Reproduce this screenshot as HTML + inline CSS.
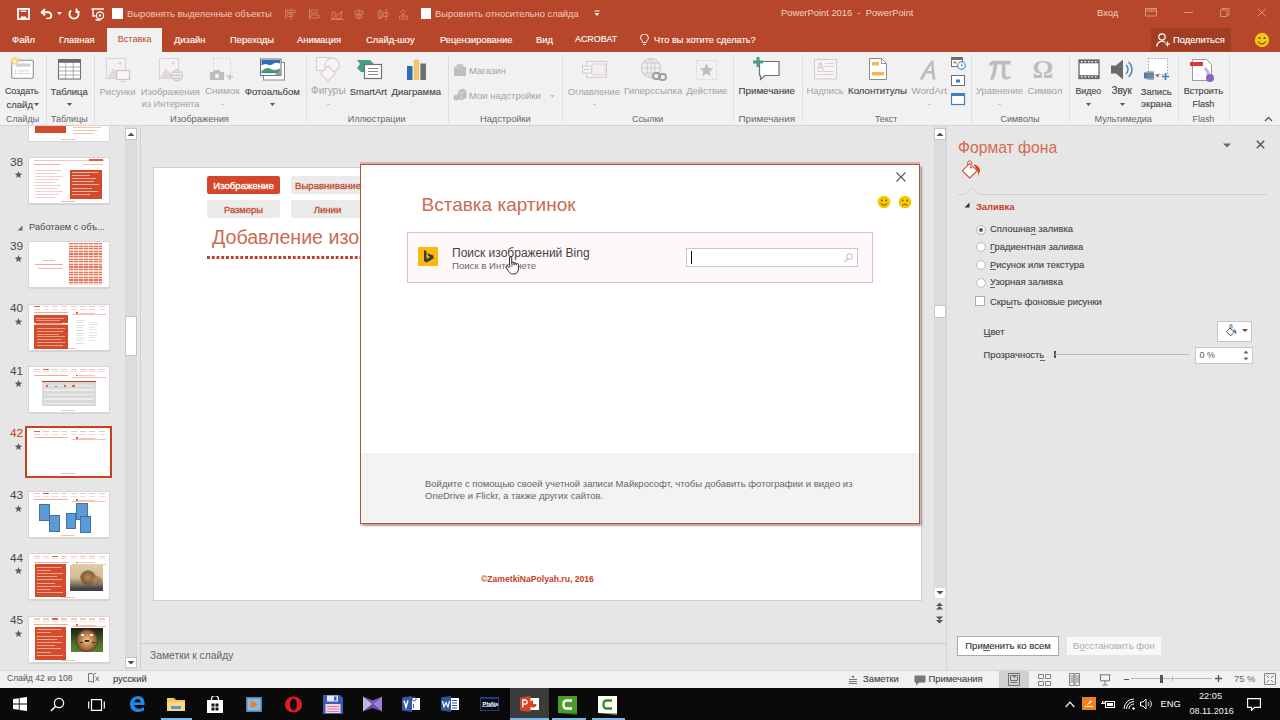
<!DOCTYPE html>
<html><head><meta charset="utf-8">
<style>
*{margin:0;padding:0;box-sizing:border-box}
html,body{width:1280px;height:720px;overflow:hidden;background:#E6E6E6;font-family:"Liberation Sans",sans-serif}
.a{position:absolute}
.t{position:absolute;white-space:nowrap;line-height:1}
.k{-webkit-text-stroke:0.12px currentColor}
#title{left:0;top:0;width:1280px;height:28px;background:#B7472A}
#tabs{left:0;top:28px;width:1280px;height:24px;background:#B7472A}
#ribbon{left:0;top:52px;width:1280px;height:74px;background:#F1F1F1;border-bottom:1px solid #D4D4D4}
#status{left:0;top:670px;width:1280px;height:18px;background:#F1F1F1;border-top:1px solid #D6D6D6}
#taskbar{left:0;top:688px;width:1280px;height:32px;background:#0A0A0A}
</style></head><body>
<!-- TITLE BAR -->
<div id="title" class="a">
 <svg class="a" style="left:17px;top:7.5px" width="13" height="12" viewBox="0 0 13 12"><path d="M1 0.9h11v10.2h-11z" fill="none" stroke="#fff" stroke-width="1.8"/><path d="M3.5 3.2h6" stroke="#fff" stroke-width="1.3"/><path d="M3.8 8.5h5.4v2.6h-5.4z" fill="#fff"/></svg>
 <svg class="a" style="left:40px;top:8px" width="13" height="11" viewBox="0 0 13 11"><path d="M1.8 4.2h6.2a3.3 3.3 0 0 1 0 6.6h-2 M5 1L1.6 4.2 5 7.4" fill="none" stroke="#fff" stroke-width="1.9"/></svg>
 <svg class="a" style="left:56.5px;top:12px" width="6" height="4"><path d="M0 0h5l-2.5 3z" fill="#fff"/></svg>
 <svg class="a" style="left:68px;top:7.5px" width="12" height="12" viewBox="0 0 12 12"><path d="M3.2 2.4A4.6 4.6 0 1 0 8.8 2.4 M8.5 0.5v3.5h3" fill="none" stroke="#fff" stroke-width="1.8"/></svg>
 <svg class="a" style="left:91px;top:7.5px" width="14" height="13" viewBox="0 0 14 13"><path d="M0.5 1h12.5 M2 1v7h2.5 M4.5 12h5" fill="none" stroke="#fff" stroke-width="1.4"/><circle cx="9" cy="7.5" r="3.6" fill="none" stroke="#fff" stroke-width="1.3"/><path d="M8 5.8v3.4l2.5-1.7z" fill="#fff"/></svg>
 <div class="a" style="left:112px;top:8px;width:11px;height:11px;background:#fff"></div>
 <div class="t" style="left:127px;top:9.4px;font-size:9.4px;color:#F2C9BD">Выровнять выделенные объекты</div>
 <svg class="a" style="left:283px;top:8px;opacity:.32" width="130" height="13" viewBox="0 0 130 13" fill="none" stroke="#fff" stroke-width="0.9">
   <path d="M2.5 1v10 M4 2h8v2.5h-8z M4 6h6v2.5h-6z M8 1v11"/>
   <path d="M26.5 1v11 M28 2h6v3h-6z M28 7h8v3h-8z"/>
   <path d="M48 11.5h13 M49 4h3v6.5h-3z M54 6h4v4.5h-4z M58.5 3v3 M57 4.5h3"/>
   <path d="M76 1v11 M72 3h8v3h-8z M73 7h6v3h-6z"/>
   <path d="M95 3h4v7h-4z M100 4.5h5v4h-5z M97 1.5v10 M103 1v11"/>
   <path d="M120 2a2 2 0 1 0 0.1 0 M116.5 8h8v3h-8z M120 6v5"/>
  </svg>
 <div class="a" style="left:421px;top:8px;width:10px;height:11px;background:#fff"></div>
 <div class="t" style="left:435px;top:9.4px;font-size:9.4px;color:#F2C9BD">Выровнять относительно слайда</div>
 <svg class="a" style="left:594px;top:10px" width="6" height="7"><path d="M0.5 1h5" stroke="#fff" stroke-width="1"/><path d="M0.5 3h5l-2.5 3z" fill="#fff"/></svg>
 <div class="t" style="left:781px;top:9px;font-size:9.35px;color:#F5D3C6">PowerPoint 2016&nbsp; -&nbsp; PowerPoint</div>
 <div class="t" style="left:1097px;top:8.2px;font-size:9.4px;color:#F5D3C6">Вход</div>
 <svg class="a" style="left:1145px;top:8px" width="12" height="9"><path d="M0.5 0.5h11v7.5h-11z" fill="none" stroke="#DC9482" stroke-width="1"/><path d="M1 1h10v3h-10z" fill="#C96A55"/><path d="M4.5 4l1.5-1.5 1.5 1.5" fill="none" stroke="#DC9482" stroke-width="0.8"/></svg>
 <div class="a" style="left:1184px;top:12px;width:8.5px;height:1px;background:#DC9482"></div>
 <svg class="a" style="left:1220px;top:8px" width="10" height="9"><path d="M0.5 2h6.5v6.5h-6.5z M2 2v-1.5h7v6.5h-2" fill="none" stroke="#DC9482" stroke-width="0.9"/></svg>
 <svg class="a" style="left:1257px;top:8px" width="10" height="9"><path d="M0.5 0.5l8.5 8 M9 0.5l-8.5 8" stroke="#DC9482" stroke-width="1"/></svg>
</div>
<!-- TABS -->
<div id="tabs" class="a">
 <div class="a" style="left:107px;top:0;width:55px;height:24px;background:#F1F1F1"></div>
 <div class="t k" style="left:12px;top:7px;font-size:9.4px;color:#fff">Файл</div>
 <div class="t k" style="left:59px;top:7px;font-size:9.4px;color:#fff">Главная</div>
 <div class="t" style="left:117.8px;top:7px;font-size:9.05px;color:#B7472A">Вставка</div>
 <div class="t k" style="left:174px;top:7px;font-size:9.4px;color:#fff">Дизайн</div>
 <div class="t k" style="left:230px;top:7px;font-size:9.4px;color:#fff">Переходы</div>
 <div class="t k" style="left:297px;top:7px;font-size:9.4px;color:#fff">Анимация</div>
 <div class="t k" style="left:366px;top:7px;font-size:9.4px;color:#fff">Слайд-шоу</div>
 <div class="t k" style="left:440px;top:7px;font-size:9.4px;color:#fff">Рецензирование</div>
 <div class="t k" style="left:536px;top:7px;font-size:9.4px;color:#fff">Вид</div>
 <div class="t k" style="left:575px;top:7px;font-size:8.9px;color:#fff">ACROBAT</div>
 <svg class="a" style="left:640px;top:6px" width="9" height="12" viewBox="0 0 9 12"><path d="M2.8 8.5c0-1.8-2.2-2.5-2.2-4.6a3.9 3.9 0 0 1 7.8 0c0 2.1-2.2 2.8-2.2 4.6z M3 10.5h3" fill="none" stroke="#fff" stroke-width="1"/></svg>
 <div class="t k" style="left:654px;top:7.6px;font-size:9.2px;color:#fff">Что вы хотите сделать?</div>
 <div class="a" style="left:1151px;top:0;width:80px;height:23px;background:#A13D23"></div>
 <svg class="a" style="left:1156px;top:5px" width="15" height="14" viewBox="0 0 15 14"><circle cx="6" cy="4" r="3.2" fill="none" stroke="#fff" stroke-width="1.2"/><path d="M0.8 13.5a5.2 5.2 0 0 1 8.5-4 M9 11h5 M11.5 8.5v5" fill="none" stroke="#fff" stroke-width="1.2"/></svg>
 <div class="t k" style="left:1173px;top:7px;font-size:9.4px;color:#fff">Поделиться</div>
 <svg class="a" style="left:1254px;top:4px" width="16" height="16" viewBox="0 0 16 16"><circle cx="8" cy="8" r="7.2" fill="#F5C518"/><circle cx="5.5" cy="6" r="1" fill="#5a4000"/><circle cx="10.5" cy="6" r="1" fill="#5a4000"/><path d="M4.2 9.3a4 4 0 0 0 7.6 0" fill="none" stroke="#5a4000" stroke-width="1"/></svg>
</div>
<!-- RIBBON -->
<div id="ribbon" class="a"></div>
<div class="a" style="left:45.5px;top:55px;width:1px;height:68px;background:#DFDFDF"></div>
<div class="a" style="left:94px;top:55px;width:1px;height:68px;background:#DFDFDF"></div>
<div class="a" style="left:306px;top:55px;width:1px;height:68px;background:#DFDFDF"></div>
<div class="a" style="left:448px;top:55px;width:1px;height:68px;background:#DFDFDF"></div>
<div class="a" style="left:562px;top:55px;width:1px;height:68px;background:#DFDFDF"></div>
<div class="a" style="left:733px;top:55px;width:1px;height:68px;background:#DFDFDF"></div>
<div class="a" style="left:801.5px;top:55px;width:1px;height:68px;background:#DFDFDF"></div>
<div class="a" style="left:971px;top:55px;width:1px;height:68px;background:#DFDFDF"></div>
<div class="a" style="left:1068.5px;top:55px;width:1px;height:68px;background:#DFDFDF"></div>
<div class="a" style="left:1177.5px;top:55px;width:1px;height:68px;background:#DFDFDF"></div>
<div class="a" style="left:1229px;top:55px;width:1px;height:68px;background:#DFDFDF"></div>
<svg class="a" style="left:9px;top:56px" width="26" height="24" viewBox="0 0 26 24"><rect x="2.7" y="4.3" width="21.6" height="18" rx="1.5" fill="#fff" stroke="#8f8f8f" stroke-width="1.1"/><rect x="7" y="7.5" width="14.5" height="3.2" fill="#d0d0d0"/><path d="M8.5 14.8h12.5 M8.5 17.5h12.5" stroke="#c4c4c4" stroke-width="0.7"/><path d="M6 14.8h1 M6 17.5h1" stroke="#E07050" stroke-width="0.8"/><circle cx="5.8" cy="5.2" r="3.6" fill="#F9E2A6" opacity="0.9"/><path d="M5.8 0.3v9.8 M0.9 5.2h9.8 M2.3 1.7l7 7 M9.3 1.7l-7 7" stroke="#F2CC6E" stroke-width="0.9"/><circle cx="5.8" cy="5.2" r="1.5" fill="#FFF8E0"/></svg>
<div class="t k" style="left:-15.0px;top:87.11px;width:73.5px;text-align:center;font-size:8.90px;color:#444;">Создать</div>
<div class="t k" style="left:6.5px;top:99.6px;font-size:9.5px;color:#444;">слайд</div>
<svg class="a" style="left:34.0px;top:103px" width="5" height="3"><path d="M0 0h5l-2.5 3z" fill="#555"/></svg>
<div class="t" style="left:-13.4px;top:114.91px;width:71.9px;text-align:center;font-size:8.90px;color:#666;">Слайды</div>
<svg class="a" style="left:57px;top:58px" width="25" height="22" viewBox="0 0 25 22"><rect x="1.5" y="1.5" width="22" height="19.5" fill="#fff" stroke="#707070" stroke-width="1.1"/><rect x="1.5" y="1.5" width="22" height="3.3" fill="#6a6a6a"/><path d="M8.7 5v16 M16.2 5v16 M1.5 9h22 M1.5 13h22 M1.5 17h22" stroke="#9a9a9a" stroke-width="0.8"/></svg>
<div class="t k" style="left:30.6px;top:86.61px;width:77.2px;text-align:center;font-size:9.49px;color:#444;">Таблица</div>
<svg class="a" style="left:67.0px;top:103px" width="5" height="3"><path d="M0 0h5l-2.5 3z" fill="#555"/></svg>
<div class="t" style="left:31.0px;top:114.81px;width:76.8px;text-align:center;font-size:9.01px;color:#666;">Таблицы</div>
<svg class="a" style="left:105px;top:57px" width="27" height="26" viewBox="0 0 27 26"><rect x="1.5" y="1.5" width="19" height="20" fill="#F6F1F4" stroke="#D8D3D6" stroke-width="1"/><circle cx="15" cy="6" r="1.6" fill="#DCD6DA"/><path d="M2 21l6-10 5 6 3-3v7z" fill="#DEDADC"/><rect x="11.5" y="13.5" width="13" height="9" fill="#F7F5F6" stroke="#C9C9C9" stroke-width="1.3"/><path d="M16 24.5h4" stroke="#c9c9c9" stroke-width="1"/></svg>
<div class="t" style="left:79.5px;top:86.57px;width:76.0px;text-align:center;font-size:9.54px;color:#A3A3A3;">Рисунки</div>
<svg class="a" style="left:158px;top:57px" width="27" height="26" viewBox="0 0 27 26"><rect x="1.5" y="1.5" width="19" height="20" fill="#F6F1F4" stroke="#D8D3D6" stroke-width="1"/><circle cx="15" cy="6" r="1.6" fill="#DCD6DA"/><path d="M2 21l6-10 5 6 3-3v7z" fill="#DEDADC"/><circle cx="19" cy="18.5" r="5.5" fill="#F4F2F3" stroke="#C9C9C9" stroke-width="1.1"/><path d="M13.5 18.5h11 M19 13v11 M15 15.5h8 M15 21.5h8" stroke="#C9C9C9" stroke-width="0.8" fill="none"/><ellipse cx="19" cy="18.5" rx="2.5" ry="5.5" fill="none" stroke="#c9c9c9" stroke-width="0.8"/></svg>
<div class="t" style="left:120.7px;top:86.65px;width:99.3px;text-align:center;font-size:9.44px;color:#A3A3A3;">Изображения</div>
<div class="t" style="left:121.5px;top:99.73px;width:98.0px;text-align:center;font-size:9.35px;color:#A3A3A3;">из Интернета</div>
<svg class="a" style="left:209px;top:57px" width="26" height="26" viewBox="0 0 26 26"><rect x="4.5" y="1.5" width="17" height="17" fill="#F6F1F4" stroke="#D4CDD2" stroke-width="0.9" stroke-dasharray="1.5 1.5"/><path d="M1 15h3l1.5-2h5l1.5 2h3v8h-14z" fill="#BDBDBD"/><circle cx="8" cy="19" r="2.2" fill="#F1F1F1"/><path d="M18 20h6 M21 17v6" stroke="#C4C4C4" stroke-width="1.3"/></svg>
<div class="t" style="left:185.0px;top:86.33px;width:74.5px;text-align:center;font-size:9.82px;color:#A3A3A3;">Снимок</div>
<div class="a" style="left:220.5px;top:104px;width:3px;height:1px;background:#c8c8c8"></div>
<svg class="a" style="left:259px;top:57px" width="27" height="26" viewBox="0 0 27 26"><rect x="4.5" y="5.5" width="21" height="17.5" fill="#fff" stroke="#8a8a8a" stroke-width="1"/><rect x="1.5" y="2" width="20.5" height="16.5" fill="#fff" stroke="#6C6C6C" stroke-width="1"/><rect x="2.5" y="3" width="18.5" height="5.5" fill="#2F6FB8"/><path d="M2.5 8.5q3-2.5 6-1 q4 1.5 6-1 q3-1.5 6.5 0v8h-18.5z" fill="#fff"/><path d="M2.5 14q5-4.5 9.5-2 q4.5 2 9-0.5v3.5h-18.5z" fill="#4E9A6A"/><path d="M2.5 15.5h18.5" stroke="#3C7FC0" stroke-width="1.3"/><path d="M15 18.5l7-6v6z" fill="#9a9a9a"/></svg>
<div class="t k" style="left:224.6px;top:86.52px;width:95.4px;text-align:center;font-size:9.59px;color:#444;">Фотоальбом</div>
<svg class="a" style="left:270.0px;top:103px" width="5" height="3"><path d="M0 0h5l-2.5 3z" fill="#555"/></svg>
<div class="t" style="left:150.0px;top:114.49px;width:99.0px;text-align:center;font-size:9.39px;color:#666;">Изображения</div>
<svg class="a" style="left:315px;top:56px" width="26" height="26" viewBox="0 0 26 26"><rect x="1.5" y="1.5" width="13" height="13" fill="#F7F3F6" stroke="#D4CDD2" stroke-width="1.1"/><circle cx="17" cy="9" r="7" fill="#F7F3F6" stroke="#D4CDD2" stroke-width="1.1"/><path d="M13 10l7.5 7.5-7.5 7.5-7.5-7.5z" fill="#F7F3F6" stroke="#D4CDD2" stroke-width="1.1"/></svg>
<div class="t" style="left:291.0px;top:86.18px;width:74.7px;text-align:center;font-size:10.00px;color:#A3A3A3;">Фигуры</div>
<div class="a" style="left:326.5px;top:104px;width:3px;height:1px;background:#c8c8c8"></div>
<svg class="a" style="left:356px;top:59px" width="27" height="21" viewBox="0 0 27 21"><path d="M1 1h13l4 4v8h-13l-4-4 3-4z" fill="#4A9D7E"/><rect x="8.5" y="5.5" width="17" height="14" fill="#fff" stroke="#707070" stroke-width="1.2"/><path d="M12 9.5h10 M12 12.5h10 M12 15.5h10" stroke="#8a8a8a" stroke-width="1"/></svg>
<div class="t k" style="left:329.8px;top:86.66px;width:77.2px;text-align:center;font-size:9.43px;color:#444;">SmartArt</div>
<svg class="a" style="left:405px;top:58px" width="23" height="23" viewBox="0 0 23 23"><rect x="2" y="8" width="5.5" height="14" fill="#2F6EB5"/><rect x="8.7" y="1.5" width="5.5" height="20.5" fill="#F2C46B"/><rect x="15.4" y="5.5" width="5.5" height="16.5" fill="#6D6D6D"/></svg>
<div class="t k" style="left:371.5px;top:86.58px;width:89.5px;text-align:center;font-size:9.52px;color:#444;">Диаграмма</div>
<div class="t" style="left:327.8px;top:114.78px;width:97.9px;text-align:center;font-size:9.05px;color:#666;">Иллюстрации</div>
<svg class="a" style="left:453px;top:63px" width="14" height="13" viewBox="0 0 14 13"><path d="M1 4h12v9h-12z" fill="#BDBDBD"/><path d="M2.5 4l2-3h5l2 3" fill="#C9C9C9"/><path d="M1 4l12 4" stroke="#d6d6d6" stroke-width="0.7"/></svg>
<div class="t" style="left:469px;top:66.1px;font-size:9.5px;color:#A3A3A3;">Магазин</div>
<svg class="a" style="left:453px;top:88px" width="14" height="13" viewBox="0 0 14 13"><circle cx="3.5" cy="9.5" r="3" fill="#BDBDBD"/><path d="M5 3l5-2.5 3.5 2v7l-5 3-3.5-2z" fill="#BDBDBD"/><path d="M8.5 5v7 M5 3l3.5 2 5-2.5" stroke="#e0e0e0" stroke-width="0.7" fill="none"/></svg>
<div class="t" style="left:469px;top:90.5px;font-size:9.5px;color:#A3A3A3;">Мои надстройки</div>
<svg class="a" style="left:549.5px;top:95px" width="5" height="3"><path d="M0 0h5l-2.5 3z" fill="#c4c4c4"/></svg>
<div class="t" style="left:460.0px;top:114.62px;width:90.7px;text-align:center;font-size:9.24px;color:#666;">Надстройки</div>
<svg class="a" style="left:581px;top:59px" width="27" height="20" viewBox="0 0 27 20"><rect x="5.5" y="2.5" width="20" height="16" fill="#F7F3F6" stroke="#D4CDD2" stroke-width="1.1"/><rect x="1.5" y="7" width="9" height="7" fill="#F7F3F6" stroke="#D4CDD2" stroke-width="1.1"/><rect x="11" y="5" width="13" height="11" fill="#F4EEF2" stroke="#DAD4D8" stroke-width="1"/><path d="M3 10.5h6" stroke="#D4CDD2" stroke-width="1"/></svg>
<div class="t" style="left:547.6px;top:86.69px;width:92.4px;text-align:center;font-size:9.40px;color:#A3A3A3;">Оглавление</div>
<div class="a" style="left:592.5px;top:104px;width:3px;height:1px;background:#c8c8c8"></div>
<svg class="a" style="left:640px;top:57px" width="27" height="25" viewBox="0 0 27 25"><circle cx="11" cy="11" r="9.5" fill="none" stroke="#CACACA" stroke-width="1.1"/><ellipse cx="11" cy="11" rx="4" ry="9.5" fill="none" stroke="#CACACA" stroke-width="1"/><path d="M1.5 11h19 M3 6h16 M3 16h16 M11 1.5v19" stroke="#CACACA" stroke-width="1" fill="none"/><rect x="13" y="16" width="7" height="6" rx="3" fill="#F1F1F1" stroke="#9E9E9E" stroke-width="2"/><rect x="19" y="17" width="7" height="6" rx="3" fill="none" stroke="#9E9E9E" stroke-width="2"/></svg>
<div class="t" style="left:604.0px;top:86.42px;width:98.4px;text-align:center;font-size:9.71px;color:#A3A3A3;">Гиперссылка</div>
<svg class="a" style="left:695px;top:59px" width="24" height="22" viewBox="0 0 24 22"><rect x="1.5" y="1.5" width="20" height="19" fill="none" stroke="#CFCFCF" stroke-width="0.9" stroke-dasharray="1.5 1.5"/><path d="M11.5 4.5l2 4.5 4.8 0.4-3.7 3.1 1.2 4.7-4.3-2.6-4.3 2.6 1.2-4.7-3.7-3.1 4.8-0.4z" fill="#BDBDBD"/></svg>
<div class="t" style="left:666.3px;top:86.75px;width:81.0px;text-align:center;font-size:9.33px;color:#A3A3A3;">Действие</div>
<div class="t" style="left:612.0px;top:114.91px;width:71.3px;text-align:center;font-size:8.90px;color:#666;">Ссылки</div>
<svg class="a" style="left:752px;top:56px" width="29" height="25" viewBox="0 0 29 25"><path d="M7.5 5.5h19.5v14h-14l-4.5 4v-4h-1z" fill="#fff" stroke="#707070" stroke-width="1.2"/><path d="M6 1v10 M1 6h10" stroke="#4A9D7E" stroke-width="3"/></svg>
<div class="t k" style="left:718.5px;top:86.38px;width:96.5px;text-align:center;font-size:9.76px;color:#444;">Примечание</div>
<div class="t" style="left:718.5px;top:114.16px;width:96.5px;text-align:center;font-size:9.79px;color:#666;">Примечания</div>
<svg class="a" style="left:813px;top:58px" width="25" height="22" viewBox="0 0 25 22"><rect x="1.5" y="1.5" width="22" height="19.5" fill="#F7F3F6" stroke="#D4CDD2" stroke-width="1.1"/><text x="4" y="11.5" font-size="10" fill="#CFC6CC" font-family="Liberation Sans">A</text><path d="M12 5.5h9 M12 8.5h9 M4 13.5h17 M4 16.5h17" stroke="#D4CDD2" stroke-width="0.9"/></svg>
<div class="t" style="left:786.4px;top:86.74px;width:77.2px;text-align:center;font-size:9.34px;color:#A3A3A3;">Надпись</div>
<svg class="a" style="left:868px;top:57px" width="20" height="24" viewBox="0 0 20 24"><path d="M1.5 1.5h12l5 5v16h-17z" fill="#fff" stroke="#8a8a8a" stroke-width="1"/><path d="M13.5 1.5v5h5" fill="none" stroke="#8a8a8a" stroke-width="0.9"/><rect x="4" y="5" width="7" height="3.5" fill="#F2B94F"/><rect x="4" y="15" width="12" height="3.5" fill="#F2B94F"/></svg>
<div class="t k" style="left:828.0px;top:86.44px;width:99.0px;text-align:center;font-size:9.69px;color:#444;">Колонтитулы</div>
<svg class="a" style="left:918px;top:59px" width="20" height="22" viewBox="0 0 20 22"><path d="M1.5 20.5C5 14 9 7 13.5 1.5L15.5 1.5C15.8 8 16.5 14 17.5 20.5L14.5 20.5L13.8 14.5H8L5 20.5z M9.3 12H13.5L13.2 5.5z" fill="#BDBDBD"/></svg>
<div class="t" style="left:891.4px;top:86.38px;width:75.6px;text-align:center;font-size:9.76px;color:#A3A3A3;">WordArt</div>
<div class="a" style="left:927.5px;top:104px;width:3px;height:1px;background:#c8c8c8"></div>
<svg class="a" style="left:951px;top:56px" width="15" height="14" viewBox="0 0 15 14"><rect x="0.5" y="1.5" width="11" height="9" fill="#fff" stroke="#6f6f6f" stroke-width="1"/><rect x="0.5" y="1.5" width="11" height="2.5" fill="#6f6f6f"/><rect x="2.5" y="5.5" width="3" height="2" fill="#E07B39"/><circle cx="10.5" cy="9.5" r="3.8" fill="#fff" stroke="#3C7FC0" stroke-width="1.1"/><path d="M10.5 7.5v2h1.5" stroke="#3C7FC0" stroke-width="0.9" fill="none"/></svg>
<svg class="a" style="left:951px;top:75px" width="15" height="12" viewBox="0 0 15 12"><rect x="0.5" y="0.5" width="13" height="10" fill="#fff" stroke="#6f6f6f" stroke-width="1"/><rect x="5" y="4.5" width="4" height="3" fill="#3C7FC0"/></svg>
<svg class="a" style="left:951px;top:93px" width="15" height="13" viewBox="0 0 15 13"><rect x="0.5" y="0.5" width="13" height="11" fill="#fff" stroke="#3C7FC0" stroke-width="1.2"/><rect x="0.5" y="0.5" width="13" height="2.5" fill="#3C7FC0"/></svg>
<div class="t" style="left:855.3px;top:114.91px;width:61.5px;text-align:center;font-size:8.90px;color:#666;">Текст</div>
<svg class="a" style="left:987px;top:59px" width="25" height="21" viewBox="0 0 25 21"><path d="M2 5.5C3 3 4.5 1.8 7 1.8H23.5V5.5H18.5V15C18.5 17 19 17.8 20.5 17.8C21.5 17.8 22.2 17.3 23 16.5L23.8 18.5C22.6 19.8 21 20.5 19.2 20.5C16 20.5 14.8 18.8 14.8 15.5V5.5H10.2C9.8 11 8.5 16.5 6.5 20.5H2.8C5 16 6.3 11 6.5 5.5C5 5.5 4.3 6.3 3.6 7.3z" fill="#BDBDBD"/></svg>
<div class="t" style="left:956.0px;top:86.70px;width:87.0px;text-align:center;font-size:9.38px;color:#A3A3A3;">Уравнение</div>
<div class="a" style="left:997.5px;top:104px;width:3px;height:1px;background:#c8c8c8"></div>
<svg class="a" style="left:1032px;top:57px" width="25" height="23" viewBox="0 0 25 23"><text x="0.5" y="21" font-size="26" font-weight="bold" fill="#BDBDBD" font-family="Liberation Serif">Ω</text></svg>
<div class="t" style="left:1007.4px;top:86.43px;width:75.0px;text-align:center;font-size:9.71px;color:#A3A3A3;">Символ</div>
<div class="t" style="left:980.5px;top:114.81px;width:79.0px;text-align:center;font-size:9.02px;color:#666;">Символы</div>
<svg class="a" style="left:1078px;top:59px" width="22" height="21" viewBox="0 0 22 21"><rect x="1" y="1" width="20" height="18.5" fill="#fff" stroke="#6a6a6a" stroke-width="1.3"/><rect x="1" y="1" width="20" height="3.3" fill="#6a6a6a"/><rect x="1" y="16.2" width="20" height="3.3" fill="#6a6a6a"/><path d="M3 2.6h1.5 M6.5 2.6h1.5 M10 2.6h1.5 M13.5 2.6h1.5 M17 2.6h1.5 M3 17.9h1.5 M6.5 17.9h1.5 M10 17.9h1.5 M13.5 17.9h1.5 M17 17.9h1.5" stroke="#fff" stroke-width="1.2"/></svg>
<div class="t k" style="left:1055.5px;top:87.11px;width:65.7px;text-align:center;font-size:8.90px;color:#444;">Видео</div>
<svg class="a" style="left:1086.0px;top:103px" width="5" height="3"><path d="M0 0h5l-2.5 3z" fill="#555"/></svg>
<svg class="a" style="left:1110px;top:58px" width="24" height="23" viewBox="0 0 24 23"><path d="M1 7.5h5l7-6v20l-7-6h-5z" fill="#6a6a6a"/><path d="M16 7a6 6 0 0 1 0 9 M18.5 4a10 10 0 0 1 0 15" fill="none" stroke="#3C7FC0" stroke-width="1.4"/></svg>
<div class="t k" style="left:1091.5px;top:86.18px;width:60.5px;text-align:center;font-size:10.00px;color:#444;">Звук</div>
<svg class="a" style="left:1119.5px;top:103px" width="5" height="3"><path d="M0 0h5l-2.5 3z" fill="#555"/></svg>
<svg class="a" style="left:1143px;top:57px" width="27" height="25" viewBox="0 0 27 25"><rect x="5.5" y="1.5" width="19" height="16" fill="#fff" stroke="#9a9a9a" stroke-width="0.9" stroke-dasharray="1.5 1.5"/><rect x="1" y="15.5" width="10" height="6" fill="#3C7FC0"/><rect x="4" y="14" width="7" height="9" fill="#8a8a8a" opacity="0.6"/><path d="M12.5 18.5l3-2v4z" fill="#6a6a6a"/><path d="M19 19.5h7 M22.5 16v7" stroke="#3C7FC0" stroke-width="1.6"/></svg>
<div class="t k" style="left:1120.8px;top:86.67px;width:70.9px;text-align:center;font-size:9.42px;color:#444;">Запись</div>
<div class="t k" style="left:1121.0px;top:99.44px;width:70.7px;text-align:center;font-size:9.69px;color:#444;">экрана</div>
<div class="t" style="left:1074.4px;top:114.68px;width:97.6px;text-align:center;font-size:9.16px;color:#666;">Мультимедиа</div>
<svg class="a" style="left:1189px;top:58px" width="28" height="25" viewBox="0 0 28 25"><path d="M3.5 1.5h14l5 5v16h-19z" fill="#fff" stroke="#9a9a9a" stroke-width="1"/><rect x="1" y="4" width="13" height="4" fill="#D9363E"/><path d="M16 10q3 3 4 8" stroke="#c4b0dc" stroke-width="3" fill="none"/><circle cx="21" cy="20" r="4" fill="#8A63C7"/></svg>
<div class="t k" style="left:1163.7px;top:86.86px;width:79.3px;text-align:center;font-size:9.19px;color:#444;">Встроить</div>
<div class="t k" style="left:1173.0px;top:100.11px;width:60.8px;text-align:center;font-size:8.90px;color:#444;">Flash</div>
<div class="t" style="left:1173.0px;top:114.91px;width:60.8px;text-align:center;font-size:8.90px;color:#666;">Flash</div>
<svg class="a" style="left:1264px;top:116px" width="9" height="6" viewBox="0 0 9 6"><path d="M1 5l3.5-3.5 3.5 3.5" fill="none" stroke="#555" stroke-width="1.3"/></svg>
<!-- LEFT -->
<div class="a" style="left:125px;top:126px;width:12px;height:544px;background:#DCDCDC"></div>
<div class="a" style="left:125px;top:128px;width:12px;height:12px;background:#fff;border:1px solid #C6C6C6"></div>
<svg class="a" style="left:127px;top:132px" width="8" height="4"><path d="M0.5 4l3.5-3.5 3.5 3.5z" fill="#505050"/></svg>
<div class="a" style="left:125px;top:315.5px;width:12px;height:40px;background:#fff;border:1px solid #C6C6C6"></div>
<div class="a" style="left:125px;top:657px;width:12px;height:11px;background:#fff;border:1px solid #C6C6C6"></div>
<svg class="a" style="left:127px;top:661px" width="8" height="4"><path d="M0.5 0l3.5 3.5 3.5-3.5z" fill="#505050"/></svg>
<div class="a" style="left:140px;top:126px;width:1px;height:544px;background:#CFCFCF"></div>
<div class="a" style="left:27.5px;top:126px;width:82px;height:16px;background:#fff;border:1px solid #D6D6D6;border-top:none"></div>
<div class="a" style="left:34.50px;top:126.00px;width:31.50px;height:7.00px;background:#D24A2B;"></div>
<div class="a" style="left:73.00px;top:127.00px;width:28.00px;height:0.80px;background:#F3C0B2;"></div>
<div class="a" style="left:73.00px;top:130.00px;width:24.00px;height:0.80px;background:#F3C0B2;"></div>
<div class="a" style="left:73.00px;top:133.00px;width:20.00px;height:0.80px;background:#F3C0B2;"></div>
<div class="a" style="left:61.00px;top:138.50px;width:14.00px;height:0.80px;background:#F3C0B2;"></div>
<div class="t" style="left:8px;top:156.5px;width:15px;text-align:right;font-size:11.8px;color:#4a4a4a">38</div>
<svg class="a" style="left:14px;top:171px" width="9" height="7" viewBox="0 0 9 8"><path d="M4.5 0l1.1 2.9 3.2 0.2-2.5 2 0.8 3-2.6-1.7-2.6 1.7 0.8-3-2.5-2 3.2-0.2z" fill="#5a5a5a"/></svg>
<div class="a" style="left:27.5px;top:157px;width:82px;height:47px;background:#fff;border:1px solid #D6D6D6;box-shadow:0 0.5px 1px rgba(0,0,0,0.08);overflow:hidden"><div class="a" style="left:-1px;top:-1px;width:82px;height:47px;filter:blur(0.3px)"><div class="a" style="left:6.00px;top:2.50px;width:70.00px;height:1.00px;background:#F4C6B9;"></div><div class="a" style="left:61.00px;top:2.20px;width:14.00px;height:2.00px;background:#E0603F;"></div><div class="a" style="left:6.00px;top:6.50px;width:26.00px;height:1.00px;background:#EFAE9E;"></div><div class="a" style="left:55.00px;top:7.00px;width:20.00px;height:0.80px;background:#F4C6B9;"></div><div class="a" style="left:7.00px;top:13.00px;width:26.00px;height:0.90px;background:#F5CFC4;"></div><div class="a" style="left:7.00px;top:16.00px;width:22.00px;height:0.90px;background:#F5CFC4;"></div><div class="a" style="left:7.00px;top:19.00px;width:28.00px;height:0.90px;background:#F5CFC4;"></div><div class="a" style="left:7.00px;top:22.00px;width:24.00px;height:0.90px;background:#F5CFC4;"></div><div class="a" style="left:7.00px;top:25.00px;width:20.00px;height:0.90px;background:#F5CFC4;"></div><div class="a" style="left:7.00px;top:28.00px;width:26.00px;height:0.90px;background:#F5CFC4;"></div><div class="a" style="left:7.00px;top:31.00px;width:22.00px;height:0.90px;background:#F5CFC4;"></div><div class="a" style="left:7.00px;top:34.00px;width:28.00px;height:0.90px;background:#F5CFC4;"></div><div class="a" style="left:7.00px;top:37.00px;width:24.00px;height:0.90px;background:#F5CFC4;"></div><div class="a" style="left:7.00px;top:40.00px;width:20.00px;height:0.90px;background:#F5CFC4;"></div><div class="a" style="left:42.00px;top:12.50px;width:32.00px;height:29.00px;background:#D24A2B;"></div><div class="a" style="left:44.00px;top:15.00px;width:26.00px;height:0.90px;background:#F0B4A4;"></div><div class="a" style="left:44.00px;top:18.10px;width:18.00px;height:0.90px;background:#F0B4A4;"></div><div class="a" style="left:44.00px;top:21.20px;width:24.00px;height:0.90px;background:#F0B4A4;"></div><div class="a" style="left:44.00px;top:24.30px;width:22.00px;height:0.90px;background:#F0B4A4;"></div><div class="a" style="left:44.00px;top:27.40px;width:27.00px;height:0.90px;background:#F0B4A4;"></div><div class="a" style="left:44.00px;top:30.50px;width:20.00px;height:0.90px;background:#F0B4A4;"></div><div class="a" style="left:44.00px;top:33.60px;width:26.00px;height:0.90px;background:#F0B4A4;"></div><div class="a" style="left:44.00px;top:36.70px;width:18.00px;height:0.90px;background:#F0B4A4;"></div><div class="a" style="left:33.00px;top:44.00px;width:14.00px;height:0.80px;background:#F3C0B2;"></div></div></div>
<svg class="a" style="left:17px;top:225px" width="6" height="6"><path d="M5.5 0.5v5h-5z" fill="#6a6a6a"/></svg>
<div class="t" style="left:29px;top:222.9px;font-size:9.3px;color:#4a4a4a">Работаем с объ...</div>
<div class="t" style="left:8px;top:240.5px;width:15px;text-align:right;font-size:11.8px;color:#4a4a4a">39</div>
<svg class="a" style="left:14px;top:255px" width="9" height="7" viewBox="0 0 9 8"><path d="M4.5 0l1.1 2.9 3.2 0.2-2.5 2 0.8 3-2.6-1.7-2.6 1.7 0.8-3-2.5-2 3.2-0.2z" fill="#5a5a5a"/></svg>
<div class="a" style="left:27.5px;top:241px;width:82px;height:47px;background:#fff;border:1px solid #D6D6D6;box-shadow:0 0.5px 1px rgba(0,0,0,0.08);overflow:hidden"><div class="a" style="left:-1px;top:-1px;width:82px;height:47px;filter:blur(0.3px)"><div class="a" style="left:15.00px;top:18.50px;width:12.00px;height:1.20px;background:#F2BCAD;"></div><div class="a" style="left:7.00px;top:22.50px;width:28.00px;height:1.40px;background:#EFAB99;"></div><div class="a" style="left:10.00px;top:26.50px;width:24.00px;height:1.20px;background:#F2BCAD;"></div><div class="a" style="left:41.50px;top:2.00px;width:33.00px;height:42.00px;background:;background:repeating-linear-gradient(to bottom,rgba(214,80,50,0.78) 0 1.3px,rgba(235,130,105,0.35) 1.3px 2.6px)"></div><div class="a" style="left:41.50px;top:2.00px;width:33.00px;height:42.00px;background:;background:repeating-linear-gradient(to right,transparent 0 4px,rgba(255,255,255,0.55) 4px 5px)"></div></div></div>
<div class="t" style="left:8px;top:303.0px;width:15px;text-align:right;font-size:11.8px;color:#4a4a4a">40</div>
<svg class="a" style="left:14px;top:317.5px" width="9" height="7" viewBox="0 0 9 8"><path d="M4.5 0l1.1 2.9 3.2 0.2-2.5 2 0.8 3-2.6-1.7-2.6 1.7 0.8-3-2.5-2 3.2-0.2z" fill="#5a5a5a"/></svg>
<div class="a" style="left:27.5px;top:303.5px;width:82px;height:47px;background:#fff;border:1px solid #D6D6D6;box-shadow:0 0.5px 1px rgba(0,0,0,0.08);overflow:hidden"><div class="a" style="left:-1px;top:-1px;width:82px;height:47px;filter:blur(0.3px)"><div class="a" style="left:6.00px;top:2.60px;width:6.00px;height:1.30px;background:#E0603F;"></div><div class="a" style="left:6.00px;top:5.20px;width:6.00px;height:1.00px;background:#F7DAD2;"></div><div class="a" style="left:15.30px;top:2.60px;width:6.00px;height:1.30px;background:#F4C6B9;"></div><div class="a" style="left:15.30px;top:5.20px;width:6.00px;height:1.00px;background:#F7DAD2;"></div><div class="a" style="left:24.60px;top:2.60px;width:6.00px;height:1.30px;background:#F4C6B9;"></div><div class="a" style="left:24.60px;top:5.20px;width:6.00px;height:1.00px;background:#F7DAD2;"></div><div class="a" style="left:33.90px;top:2.60px;width:6.00px;height:1.30px;background:#F4C6B9;"></div><div class="a" style="left:33.90px;top:5.20px;width:6.00px;height:1.00px;background:#F7DAD2;"></div><div class="a" style="left:43.20px;top:2.60px;width:6.00px;height:1.30px;background:#F4C6B9;"></div><div class="a" style="left:43.20px;top:5.20px;width:6.00px;height:1.00px;background:#F7DAD2;"></div><div class="a" style="left:52.50px;top:2.60px;width:6.00px;height:1.30px;background:#F4C6B9;"></div><div class="a" style="left:52.50px;top:5.20px;width:6.00px;height:1.00px;background:#F7DAD2;"></div><div class="a" style="left:61.80px;top:2.60px;width:6.00px;height:1.30px;background:#F4C6B9;"></div><div class="a" style="left:61.80px;top:5.20px;width:6.00px;height:1.00px;background:#F7DAD2;"></div><div class="a" style="left:71.10px;top:2.60px;width:6.00px;height:1.30px;background:#F4C6B9;"></div><div class="a" style="left:71.10px;top:5.20px;width:6.00px;height:1.00px;background:#F7DAD2;"></div><div class="a" style="left:6.00px;top:8.50px;width:34.00px;height:1.00px;background:#EFAE9E;"></div><div class="a" style="left:48.00px;top:8.50px;width:2.00px;height:1.50px;background:#E0603F;"></div><div class="a" style="left:51.00px;top:9.00px;width:16.00px;height:0.80px;background:#F4C6B9;"></div><div class="a" style="left:44.00px;top:10.60px;width:34.00px;height:0.80px;background:#F3C0B2;"></div><div class="a" style="left:33.00px;top:44.00px;width:14.00px;height:0.80px;background:#F3C0B2;"></div><div class="a" style="left:6.50px;top:11.80px;width:34.00px;height:8.00px;background:#D54B2C;"></div><div class="a" style="left:6.50px;top:20.70px;width:34.00px;height:0.80px;background:#F3B8A8;"></div><div class="a" style="left:6.50px;top:21.50px;width:34.00px;height:23.50px;background:#D54B2C;"></div><div class="a" style="left:8.50px;top:14.00px;width:28.00px;height:0.90px;background:#EC9A84;"></div><div class="a" style="left:8.50px;top:16.50px;width:24.00px;height:0.90px;background:#EC9A84;"></div><div class="a" style="left:8.50px;top:19.00px;width:26.00px;height:0.90px;background:#EC9A84;"></div><div class="a" style="left:9.00px;top:24.50px;width:28.00px;height:0.90px;background:#EE9F89;"></div><div class="a" style="left:9.00px;top:27.30px;width:26.00px;height:0.90px;background:#EE9F89;"></div><div class="a" style="left:9.00px;top:30.10px;width:22.00px;height:0.90px;background:#EE9F89;"></div><div class="a" style="left:9.00px;top:32.90px;width:28.00px;height:0.90px;background:#EE9F89;"></div><div class="a" style="left:9.00px;top:35.70px;width:25.00px;height:0.90px;background:#EE9F89;"></div><div class="a" style="left:9.00px;top:38.50px;width:28.00px;height:0.90px;background:#EE9F89;"></div><div class="a" style="left:9.00px;top:41.30px;width:26.00px;height:0.90px;background:#EE9F89;"></div><div class="a" style="left:48.00px;top:16.00px;width:9.00px;height:0.90px;background:#E2E2E2;"></div><div class="a" style="left:48.00px;top:18.60px;width:7.00px;height:0.90px;background:#E2E2E2;"></div><div class="a" style="left:48.00px;top:21.20px;width:9.00px;height:0.90px;background:#E2E2E2;"></div><div class="a" style="left:48.00px;top:23.80px;width:6.00px;height:0.90px;background:#E2E2E2;"></div><div class="a" style="left:48.00px;top:26.40px;width:8.00px;height:0.90px;background:#E2E2E2;"></div><div class="a" style="left:48.00px;top:29.00px;width:9.00px;height:0.90px;background:#E2E2E2;"></div><div class="a" style="left:48.00px;top:31.60px;width:7.00px;height:0.90px;background:#E2E2E2;"></div><div class="a" style="left:48.00px;top:34.20px;width:9.00px;height:0.90px;background:#E2E2E2;"></div><div class="a" style="left:48.00px;top:36.80px;width:6.00px;height:0.90px;background:#E2E2E2;"></div><div class="a" style="left:48.00px;top:39.40px;width:8.00px;height:0.90px;background:#E2E2E2;"></div><div class="a" style="left:61.00px;top:18.00px;width:8.00px;height:0.90px;background:#E6E6E6;"></div><div class="a" style="left:61.00px;top:20.60px;width:9.00px;height:0.90px;background:#E6E6E6;"></div><div class="a" style="left:61.00px;top:23.20px;width:6.00px;height:0.90px;background:#E6E6E6;"></div><div class="a" style="left:61.00px;top:25.80px;width:8.00px;height:0.90px;background:#E6E6E6;"></div><div class="a" style="left:61.00px;top:28.40px;width:8.00px;height:0.90px;background:#E6E6E6;"></div><div class="a" style="left:61.00px;top:31.00px;width:9.00px;height:0.90px;background:#E6E6E6;"></div><div class="a" style="left:61.00px;top:33.60px;width:6.00px;height:0.90px;background:#E6E6E6;"></div><div class="a" style="left:61.00px;top:36.20px;width:8.00px;height:0.90px;background:#E6E6E6;"></div></div></div>
<div class="t" style="left:8px;top:365.5px;width:15px;text-align:right;font-size:11.8px;color:#4a4a4a">41</div>
<svg class="a" style="left:14px;top:380px" width="9" height="7" viewBox="0 0 9 8"><path d="M4.5 0l1.1 2.9 3.2 0.2-2.5 2 0.8 3-2.6-1.7-2.6 1.7 0.8-3-2.5-2 3.2-0.2z" fill="#5a5a5a"/></svg>
<div class="a" style="left:27.5px;top:366px;width:82px;height:47px;background:#fff;border:1px solid #D6D6D6;box-shadow:0 0.5px 1px rgba(0,0,0,0.08);overflow:hidden"><div class="a" style="left:-1px;top:-1px;width:82px;height:47px;filter:blur(0.3px)"><div class="a" style="left:6.00px;top:2.60px;width:6.00px;height:1.30px;background:#F4C6B9;"></div><div class="a" style="left:6.00px;top:5.20px;width:6.00px;height:1.00px;background:#F7DAD2;"></div><div class="a" style="left:15.30px;top:2.60px;width:6.00px;height:1.30px;background:#E0603F;"></div><div class="a" style="left:15.30px;top:5.20px;width:6.00px;height:1.00px;background:#F7DAD2;"></div><div class="a" style="left:24.60px;top:2.60px;width:6.00px;height:1.30px;background:#F4C6B9;"></div><div class="a" style="left:24.60px;top:5.20px;width:6.00px;height:1.00px;background:#F7DAD2;"></div><div class="a" style="left:33.90px;top:2.60px;width:6.00px;height:1.30px;background:#F4C6B9;"></div><div class="a" style="left:33.90px;top:5.20px;width:6.00px;height:1.00px;background:#F7DAD2;"></div><div class="a" style="left:43.20px;top:2.60px;width:6.00px;height:1.30px;background:#F4C6B9;"></div><div class="a" style="left:43.20px;top:5.20px;width:6.00px;height:1.00px;background:#F7DAD2;"></div><div class="a" style="left:52.50px;top:2.60px;width:6.00px;height:1.30px;background:#F4C6B9;"></div><div class="a" style="left:52.50px;top:5.20px;width:6.00px;height:1.00px;background:#F7DAD2;"></div><div class="a" style="left:61.80px;top:2.60px;width:6.00px;height:1.30px;background:#F4C6B9;"></div><div class="a" style="left:61.80px;top:5.20px;width:6.00px;height:1.00px;background:#F7DAD2;"></div><div class="a" style="left:71.10px;top:2.60px;width:6.00px;height:1.30px;background:#F4C6B9;"></div><div class="a" style="left:71.10px;top:5.20px;width:6.00px;height:1.00px;background:#F7DAD2;"></div><div class="a" style="left:6.00px;top:8.50px;width:34.00px;height:1.00px;background:#EFAE9E;"></div><div class="a" style="left:48.00px;top:8.50px;width:2.00px;height:1.50px;background:#E0603F;"></div><div class="a" style="left:51.00px;top:9.00px;width:16.00px;height:0.80px;background:#F4C6B9;"></div><div class="a" style="left:44.00px;top:10.60px;width:34.00px;height:0.80px;background:#F3C0B2;"></div><div class="a" style="left:33.00px;top:44.00px;width:14.00px;height:0.80px;background:#F3C0B2;"></div><div class="a" style="left:14.00px;top:14.50px;width:54.00px;height:1.50px;background:#C0391B;"></div><div class="a" style="left:14.00px;top:16.00px;width:54.00px;height:24.00px;background:#D9D9D9;"></div><div class="a" style="left:16.00px;top:18.50px;width:50.00px;height:1.80px;background:#ECECEC;"></div><div class="a" style="left:16.00px;top:23.00px;width:50.00px;height:1.80px;background:#ECECEC;"></div><div class="a" style="left:16.00px;top:27.50px;width:50.00px;height:1.80px;background:#ECECEC;"></div><div class="a" style="left:16.00px;top:32.00px;width:50.00px;height:1.80px;background:#ECECEC;"></div><div class="a" style="left:16.00px;top:36.50px;width:50.00px;height:1.80px;background:#ECECEC;"></div><div class="a" style="left:18.00px;top:19.00px;width:2.00px;height:2.00px;background:#E0603F;"></div><div class="a" style="left:27.00px;top:19.50px;width:2.00px;height:1.50px;background:#E0603F;"></div><div class="a" style="left:36.00px;top:19.00px;width:2.00px;height:2.00px;background:#E0603F;"></div><div class="a" style="left:44.00px;top:19.00px;width:3.00px;height:2.00px;background:#E0603F;"></div></div></div>
<div class="t" style="left:8px;top:428.0px;width:15px;text-align:right;font-size:11.8px;color:#C43E1C">42</div>
<svg class="a" style="left:14px;top:442.5px" width="9" height="7" viewBox="0 0 9 8"><path d="M4.5 0l1.1 2.9 3.2 0.2-2.5 2 0.8 3-2.6-1.7-2.6 1.7 0.8-3-2.5-2 3.2-0.2z" fill="#5a5a5a"/></svg>
<div class="a" style="left:25px;top:426.0px;width:86.5px;height:51.5px;border:2.5px solid #C9401E;background:#fff"></div>
<div class="a" style="left:27.5px;top:428.5px;width:82px;height:47px;overflow:hidden"><div class="a" style="left:0;top:0;width:82px;height:47px;filter:blur(0.3px)"><div class="a" style="left:6.00px;top:2.60px;width:6.00px;height:1.30px;background:#E0603F;"></div><div class="a" style="left:6.00px;top:5.20px;width:6.00px;height:1.00px;background:#F7DAD2;"></div><div class="a" style="left:15.30px;top:2.60px;width:6.00px;height:1.30px;background:#F4C6B9;"></div><div class="a" style="left:15.30px;top:5.20px;width:6.00px;height:1.00px;background:#F7DAD2;"></div><div class="a" style="left:24.60px;top:2.60px;width:6.00px;height:1.30px;background:#F4C6B9;"></div><div class="a" style="left:24.60px;top:5.20px;width:6.00px;height:1.00px;background:#F7DAD2;"></div><div class="a" style="left:33.90px;top:2.60px;width:6.00px;height:1.30px;background:#F4C6B9;"></div><div class="a" style="left:33.90px;top:5.20px;width:6.00px;height:1.00px;background:#F7DAD2;"></div><div class="a" style="left:43.20px;top:2.60px;width:6.00px;height:1.30px;background:#F4C6B9;"></div><div class="a" style="left:43.20px;top:5.20px;width:6.00px;height:1.00px;background:#F7DAD2;"></div><div class="a" style="left:52.50px;top:2.60px;width:6.00px;height:1.30px;background:#F4C6B9;"></div><div class="a" style="left:52.50px;top:5.20px;width:6.00px;height:1.00px;background:#F7DAD2;"></div><div class="a" style="left:61.80px;top:2.60px;width:6.00px;height:1.30px;background:#F4C6B9;"></div><div class="a" style="left:61.80px;top:5.20px;width:6.00px;height:1.00px;background:#F7DAD2;"></div><div class="a" style="left:71.10px;top:2.60px;width:6.00px;height:1.30px;background:#F4C6B9;"></div><div class="a" style="left:71.10px;top:5.20px;width:6.00px;height:1.00px;background:#F7DAD2;"></div><div class="a" style="left:6.00px;top:8.50px;width:34.00px;height:1.00px;background:#EFAE9E;"></div><div class="a" style="left:48.00px;top:8.50px;width:2.00px;height:1.50px;background:#E0603F;"></div><div class="a" style="left:51.00px;top:9.00px;width:16.00px;height:0.80px;background:#F4C6B9;"></div><div class="a" style="left:44.00px;top:10.60px;width:34.00px;height:0.80px;background:#F3C0B2;"></div><div class="a" style="left:33.00px;top:44.00px;width:14.00px;height:0.80px;background:#F3C0B2;"></div></div></div>
<div class="t" style="left:8px;top:490.0px;width:15px;text-align:right;font-size:11.8px;color:#4a4a4a">43</div>
<svg class="a" style="left:14px;top:504.5px" width="9" height="7" viewBox="0 0 9 8"><path d="M4.5 0l1.1 2.9 3.2 0.2-2.5 2 0.8 3-2.6-1.7-2.6 1.7 0.8-3-2.5-2 3.2-0.2z" fill="#5a5a5a"/></svg>
<div class="a" style="left:27.5px;top:490.5px;width:82px;height:47px;background:#fff;border:1px solid #D6D6D6;box-shadow:0 0.5px 1px rgba(0,0,0,0.08);overflow:hidden"><div class="a" style="left:-1px;top:-1px;width:82px;height:47px;filter:blur(0.3px)"><div class="a" style="left:6.00px;top:2.60px;width:6.00px;height:1.30px;background:#F4C6B9;"></div><div class="a" style="left:6.00px;top:5.20px;width:6.00px;height:1.00px;background:#F7DAD2;"></div><div class="a" style="left:15.30px;top:2.60px;width:6.00px;height:1.30px;background:#E0603F;"></div><div class="a" style="left:15.30px;top:5.20px;width:6.00px;height:1.00px;background:#F7DAD2;"></div><div class="a" style="left:24.60px;top:2.60px;width:6.00px;height:1.30px;background:#F4C6B9;"></div><div class="a" style="left:24.60px;top:5.20px;width:6.00px;height:1.00px;background:#F7DAD2;"></div><div class="a" style="left:33.90px;top:2.60px;width:6.00px;height:1.30px;background:#F4C6B9;"></div><div class="a" style="left:33.90px;top:5.20px;width:6.00px;height:1.00px;background:#F7DAD2;"></div><div class="a" style="left:43.20px;top:2.60px;width:6.00px;height:1.30px;background:#F4C6B9;"></div><div class="a" style="left:43.20px;top:5.20px;width:6.00px;height:1.00px;background:#F7DAD2;"></div><div class="a" style="left:52.50px;top:2.60px;width:6.00px;height:1.30px;background:#F4C6B9;"></div><div class="a" style="left:52.50px;top:5.20px;width:6.00px;height:1.00px;background:#F7DAD2;"></div><div class="a" style="left:61.80px;top:2.60px;width:6.00px;height:1.30px;background:#F4C6B9;"></div><div class="a" style="left:61.80px;top:5.20px;width:6.00px;height:1.00px;background:#F7DAD2;"></div><div class="a" style="left:71.10px;top:2.60px;width:6.00px;height:1.30px;background:#F4C6B9;"></div><div class="a" style="left:71.10px;top:5.20px;width:6.00px;height:1.00px;background:#F7DAD2;"></div><div class="a" style="left:6.00px;top:8.50px;width:34.00px;height:1.00px;background:#EFAE9E;"></div><div class="a" style="left:48.00px;top:8.50px;width:2.00px;height:1.50px;background:#E0603F;"></div><div class="a" style="left:51.00px;top:9.00px;width:16.00px;height:0.80px;background:#F4C6B9;"></div><div class="a" style="left:44.00px;top:10.60px;width:34.00px;height:0.80px;background:#F3C0B2;"></div><div class="a" style="left:33.00px;top:44.00px;width:14.00px;height:0.80px;background:#F3C0B2;"></div><div class="a" style="left:11.25px;top:13.50px;width:11.25px;height:17.00px;background:#5B9BD5;border:0.6px solid #41719C"></div><div class="a" style="left:21.25px;top:24.25px;width:11.25px;height:16.75px;background:#5B9BD5;border:0.6px solid #41719C"></div><div class="a" style="left:38.75px;top:22.25px;width:10.00px;height:16.50px;background:#5B9BD5;border:0.6px solid #41719C"></div><div class="a" style="left:48.75px;top:12.50px;width:11.25px;height:16.75px;background:#5B9BD5;border:0.6px solid #41719C"></div><div class="a" style="left:52.00px;top:25.50px;width:11.00px;height:16.75px;background:#5B9BD5;border:0.6px solid #41719C"></div></div></div>
<div class="t" style="left:8px;top:552.5px;width:15px;text-align:right;font-size:11.8px;color:#4a4a4a">44</div>
<svg class="a" style="left:14px;top:567px" width="9" height="7" viewBox="0 0 9 8"><path d="M4.5 0l1.1 2.9 3.2 0.2-2.5 2 0.8 3-2.6-1.7-2.6 1.7 0.8-3-2.5-2 3.2-0.2z" fill="#5a5a5a"/></svg>
<div class="a" style="left:27.5px;top:553px;width:82px;height:47px;background:#fff;border:1px solid #D6D6D6;box-shadow:0 0.5px 1px rgba(0,0,0,0.08);overflow:hidden"><div class="a" style="left:-1px;top:-1px;width:82px;height:47px;filter:blur(0.3px)"><div class="a" style="left:6.00px;top:2.60px;width:6.00px;height:1.30px;background:#F4C6B9;"></div><div class="a" style="left:6.00px;top:5.20px;width:6.00px;height:1.00px;background:#F7DAD2;"></div><div class="a" style="left:15.30px;top:2.60px;width:6.00px;height:1.30px;background:#F4C6B9;"></div><div class="a" style="left:15.30px;top:5.20px;width:6.00px;height:1.00px;background:#F7DAD2;"></div><div class="a" style="left:24.60px;top:2.60px;width:6.00px;height:1.30px;background:#E0603F;"></div><div class="a" style="left:24.60px;top:5.20px;width:6.00px;height:1.00px;background:#F7DAD2;"></div><div class="a" style="left:33.90px;top:2.60px;width:6.00px;height:1.30px;background:#F4C6B9;"></div><div class="a" style="left:33.90px;top:5.20px;width:6.00px;height:1.00px;background:#F7DAD2;"></div><div class="a" style="left:43.20px;top:2.60px;width:6.00px;height:1.30px;background:#F4C6B9;"></div><div class="a" style="left:43.20px;top:5.20px;width:6.00px;height:1.00px;background:#F7DAD2;"></div><div class="a" style="left:52.50px;top:2.60px;width:6.00px;height:1.30px;background:#F4C6B9;"></div><div class="a" style="left:52.50px;top:5.20px;width:6.00px;height:1.00px;background:#F7DAD2;"></div><div class="a" style="left:61.80px;top:2.60px;width:6.00px;height:1.30px;background:#F4C6B9;"></div><div class="a" style="left:61.80px;top:5.20px;width:6.00px;height:1.00px;background:#F7DAD2;"></div><div class="a" style="left:71.10px;top:2.60px;width:6.00px;height:1.30px;background:#F4C6B9;"></div><div class="a" style="left:71.10px;top:5.20px;width:6.00px;height:1.00px;background:#F7DAD2;"></div><div class="a" style="left:6.00px;top:8.50px;width:34.00px;height:1.00px;background:#EFAE9E;"></div><div class="a" style="left:48.00px;top:8.50px;width:2.00px;height:1.50px;background:#E0603F;"></div><div class="a" style="left:51.00px;top:9.00px;width:16.00px;height:0.80px;background:#F4C6B9;"></div><div class="a" style="left:44.00px;top:10.60px;width:34.00px;height:0.80px;background:#F3C0B2;"></div><div class="a" style="left:33.00px;top:44.00px;width:14.00px;height:0.80px;background:#F3C0B2;"></div><div class="a" style="left:7.00px;top:11.00px;width:31.50px;height:33.00px;background:#D54B2C;"></div><div class="a" style="left:9.00px;top:13.50px;width:24.00px;height:0.90px;background:#EFA894;"></div><div class="a" style="left:9.00px;top:16.70px;width:14.00px;height:0.90px;background:#EFA894;"></div><div class="a" style="left:9.00px;top:19.90px;width:26.00px;height:0.90px;background:#EFA894;"></div><div class="a" style="left:9.00px;top:23.10px;width:20.00px;height:0.90px;background:#EFA894;"></div><div class="a" style="left:9.00px;top:26.30px;width:25.00px;height:0.90px;background:#EFA894;"></div><div class="a" style="left:9.00px;top:29.50px;width:18.00px;height:0.90px;background:#EFA894;"></div><div class="a" style="left:9.00px;top:32.70px;width:24.00px;height:0.90px;background:#EFA894;"></div><div class="a" style="left:9.00px;top:35.90px;width:14.00px;height:0.90px;background:#EFA894;"></div><div class="a" style="left:9.00px;top:39.10px;width:26.00px;height:0.90px;background:#EFA894;"></div><div class="a" style="left:42.00px;top:12.00px;width:33.50px;height:25.50px;background:;background:linear-gradient(to bottom,#DCCBA8 0%,#D2BC94 50%,#8C7A60 72%,#4A4A50 88%,#3A3C44 100%)"></div><div class="a" style="left:52.00px;top:17.00px;width:16.00px;height:15.00px;background:;border-radius:50%;background:radial-gradient(ellipse at 50% 50%,#C09058 0%,#8A6535 45%,rgba(90,65,35,0.6) 65%,transparent 75%)"></div><div class="a" style="left:60.00px;top:22.00px;width:14.00px;height:10.00px;background:;border-radius:50%;background:radial-gradient(ellipse,#B08858 0%,rgba(140,105,70,0.6) 55%,transparent 72%)"></div></div></div>
<div class="t" style="left:8px;top:615.2px;width:15px;text-align:right;font-size:11.8px;color:#4a4a4a">45</div>
<svg class="a" style="left:14px;top:629.7px" width="9" height="7" viewBox="0 0 9 8"><path d="M4.5 0l1.1 2.9 3.2 0.2-2.5 2 0.8 3-2.6-1.7-2.6 1.7 0.8-3-2.5-2 3.2-0.2z" fill="#5a5a5a"/></svg>
<div class="a" style="left:27.5px;top:615.7px;width:82px;height:47px;background:#fff;border:1px solid #D6D6D6;box-shadow:0 0.5px 1px rgba(0,0,0,0.08);overflow:hidden"><div class="a" style="left:-1px;top:-1px;width:82px;height:47px;filter:blur(0.3px)"><div class="a" style="left:6.00px;top:2.60px;width:6.00px;height:1.30px;background:#F4C6B9;"></div><div class="a" style="left:6.00px;top:5.20px;width:6.00px;height:1.00px;background:#F7DAD2;"></div><div class="a" style="left:15.30px;top:2.60px;width:6.00px;height:1.30px;background:#F4C6B9;"></div><div class="a" style="left:15.30px;top:5.20px;width:6.00px;height:1.00px;background:#F7DAD2;"></div><div class="a" style="left:24.60px;top:2.60px;width:6.00px;height:1.30px;background:#E0603F;"></div><div class="a" style="left:24.60px;top:5.20px;width:6.00px;height:1.00px;background:#F7DAD2;"></div><div class="a" style="left:33.90px;top:2.60px;width:6.00px;height:1.30px;background:#F4C6B9;"></div><div class="a" style="left:33.90px;top:5.20px;width:6.00px;height:1.00px;background:#F7DAD2;"></div><div class="a" style="left:43.20px;top:2.60px;width:6.00px;height:1.30px;background:#F4C6B9;"></div><div class="a" style="left:43.20px;top:5.20px;width:6.00px;height:1.00px;background:#F7DAD2;"></div><div class="a" style="left:52.50px;top:2.60px;width:6.00px;height:1.30px;background:#F4C6B9;"></div><div class="a" style="left:52.50px;top:5.20px;width:6.00px;height:1.00px;background:#F7DAD2;"></div><div class="a" style="left:61.80px;top:2.60px;width:6.00px;height:1.30px;background:#F4C6B9;"></div><div class="a" style="left:61.80px;top:5.20px;width:6.00px;height:1.00px;background:#F7DAD2;"></div><div class="a" style="left:71.10px;top:2.60px;width:6.00px;height:1.30px;background:#F4C6B9;"></div><div class="a" style="left:71.10px;top:5.20px;width:6.00px;height:1.00px;background:#F7DAD2;"></div><div class="a" style="left:6.00px;top:8.50px;width:34.00px;height:1.00px;background:#EFAE9E;"></div><div class="a" style="left:48.00px;top:8.50px;width:2.00px;height:1.50px;background:#E0603F;"></div><div class="a" style="left:51.00px;top:9.00px;width:16.00px;height:0.80px;background:#F4C6B9;"></div><div class="a" style="left:44.00px;top:10.60px;width:34.00px;height:0.80px;background:#F3C0B2;"></div><div class="a" style="left:33.00px;top:44.00px;width:14.00px;height:0.80px;background:#F3C0B2;"></div><div class="a" style="left:7.00px;top:11.00px;width:31.50px;height:33.00px;background:#D54B2C;"></div><div class="a" style="left:9.00px;top:13.50px;width:24.00px;height:0.90px;background:#EFA894;"></div><div class="a" style="left:9.00px;top:16.70px;width:14.00px;height:0.90px;background:#EFA894;"></div><div class="a" style="left:9.00px;top:19.90px;width:26.00px;height:0.90px;background:#EFA894;"></div><div class="a" style="left:9.00px;top:23.10px;width:20.00px;height:0.90px;background:#EFA894;"></div><div class="a" style="left:9.00px;top:26.30px;width:25.00px;height:0.90px;background:#EFA894;"></div><div class="a" style="left:9.00px;top:29.50px;width:18.00px;height:0.90px;background:#EFA894;"></div><div class="a" style="left:9.00px;top:32.70px;width:24.00px;height:0.90px;background:#EFA894;"></div><div class="a" style="left:9.00px;top:35.90px;width:14.00px;height:0.90px;background:#EFA894;"></div><div class="a" style="left:9.00px;top:39.10px;width:26.00px;height:0.90px;background:#EFA894;"></div><div class="a" style="left:43.00px;top:12.00px;width:32.30px;height:24.50px;background:;background:linear-gradient(to bottom,#1A2410 0%,#2E4A1C 35%,#4A7A2C 70%,#5A8030 100%)"></div><div class="a" style="left:48.00px;top:13.50px;width:22.00px;height:23.00px;background:;border-radius:45%;background:radial-gradient(ellipse at 50% 50%,#E6D0B0 0%,#C88850 35%,#9A6038 58%,rgba(80,50,30,0.7) 70%,transparent 76%)"></div><div class="a" style="left:53.00px;top:18.00px;width:3.00px;height:2.00px;background:#F4E8D8;"></div><div class="a" style="left:62.00px;top:18.00px;width:3.00px;height:2.00px;background:#F4E8D8;"></div><div class="a" style="left:57.00px;top:24.00px;width:4.00px;height:2.50px;background:#3a2a1a;"></div><div class="a" style="left:52.00px;top:26.00px;width:3.00px;height:1.00px;background:#333;"></div><div class="a" style="left:64.00px;top:26.00px;width:3.00px;height:1.00px;background:#333;"></div></div></div>
<!-- MAIN / SLIDE -->
<div class="a" style="left:153px;top:167px;width:769px;height:434px;background:#fff;border:1px solid #CFCFCF"></div>
<div class="a" style="left:207px;top:176px;width:73px;height:17.5px;background:#D4472A;border-radius:2px"></div>
<div class="t" style="left:207px;top:180.9px;width:73px;text-align:center;font-size:9.6px;color:#fff;-webkit-text-stroke:0.35px #fff">Изображение</div>
<div class="a" style="left:291px;top:176px;width:75px;height:17.5px;background:#EBEBEB;border-radius:2px"></div>
<div class="t" style="left:295px;top:180.9px;font-size:9.6px;color:#C0533A;-webkit-text-stroke:0.35px #C0533A">Выравнивание</div>
<div class="a" style="left:207px;top:200px;width:73px;height:18px;background:#EBEBEB;border-radius:2px"></div>
<div class="t" style="left:207px;top:205px;width:73px;text-align:center;font-size:9.4px;color:#C0533A;-webkit-text-stroke:0.35px #C0533A">Размеры</div>
<div class="a" style="left:291px;top:200px;width:75px;height:18px;background:#EBEBEB;border-radius:2px"></div>
<div class="t" style="left:291px;top:205px;width:73px;text-align:center;font-size:9.6px;color:#C0533A;-webkit-text-stroke:0.35px #C0533A">Линии</div>
<div class="t" style="left:212px;top:228.3px;font-size:19.6px;color:#CB6A52">Добавление изображений</div>
<div class="a" style="left:206.8px;top:256px;width:160px;height:2.5px;background-image:linear-gradient(to right,#B8402C 0 2.4px,transparent 2.4px);background-size:4.78px 2.5px"></div>
<div class="t" style="left:481px;top:575.3px;font-size:8.6px;font-weight:bold;color:#C9401E">©ZametkiNaPolyah.ru, 2016</div>

<!-- right vertical scrollbar of slide area -->
<div class="a" style="left:933.5px;top:126px;width:12.5px;height:473px;background:#DCDCDC"></div>
<div class="a" style="left:933.5px;top:128px;width:12.5px;height:12px;background:#fff;border:1px solid #C6C6C6"></div>
<svg class="a" style="left:936px;top:132px" width="8" height="4"><path d="M0.5 4l3.5-3.5 3.5 3.5z" fill="#505050"/></svg>
<div class="a" style="left:933.5px;top:305px;width:12.5px;height:13px;background:#fff;border:1px solid #C6C6C6"></div>
<div class="a" style="left:933.5px;top:587px;width:12px;height:11.5px;background:#fff;border:1px solid #E0E0E0"></div>
<svg class="a" style="left:936px;top:591px" width="8" height="4"><path d="M0.5 0l3.5 3.5 3.5-3.5z" fill="#505050"/></svg>
<svg class="a" style="left:936px;top:602px" width="7" height="8"><path d="M0 4l3.5-3.5 3.5 3.5z M0 7.5l3.5-3.5 3.5 3.5z" fill="#555"/></svg>
<svg class="a" style="left:936px;top:616px" width="7" height="8"><path d="M0 0.5l3.5 3.5 3.5-3.5z M0 4l3.5 3.5 3.5-3.5z" fill="#555"/></svg>
<div class="a" style="left:946px;top:126px;width:1px;height:544px;background:#D6D6D6"></div>

<!-- notes -->
<div class="a" style="left:141px;top:643px;width:805px;height:1px;background:#C8C8C8"></div>
<div class="t" style="left:150px;top:651.2px;font-size:10.3px;color:#666">Заметки к слайду</div>

<!-- DIALOG -->
<div class="a" style="left:360px;top:162px;width:560px;height:2px;background:#DDB2A8"></div>
<div class="a" style="left:363px;top:167px;width:559px;height:359px;background:rgba(0,0,0,0.30);filter:blur(1px)"></div>
<div class="a" style="left:360px;top:164px;width:560px;height:360px;background:#fff;border:1px solid #A9553F"></div>
<div class="a" style="left:360px;top:524px;width:560px;height:2px;background:rgba(200,120,100,0.35)"></div>
<div class="a" style="left:361px;top:453px;width:558px;height:69px;background:#F3F3F3"></div>
<svg class="a" style="left:896px;top:172px" width="10" height="10"><path d="M0.5 0.5l9 9 M9.5 0.5l-9 9" stroke="#5a5a5a" stroke-width="1.1"/></svg>
<div class="t" style="left:421.5px;top:195.2px;font-size:19px;color:#CB6A55">Вставка картинок</div>
<svg class="a" style="left:877px;top:195px" width="14" height="14" viewBox="0 0 14 14"><circle cx="7" cy="7" r="6.3" fill="#F7C700"/><circle cx="4.8" cy="5.3" r="0.9" fill="#6b5300"/><circle cx="9.2" cy="5.3" r="0.9" fill="#6b5300"/><path d="M3.8 8.2a3.5 3.5 0 0 0 6.4 0" fill="none" stroke="#6b5300" stroke-width="0.9"/></svg>
<svg class="a" style="left:897.5px;top:195px" width="14" height="14" viewBox="0 0 14 14"><circle cx="7" cy="7" r="6.3" fill="#F7C700"/><circle cx="4.8" cy="5.3" r="0.9" fill="#6b5300"/><circle cx="9.2" cy="5.3" r="0.9" fill="#6b5300"/><path d="M4.2 10.8a3.3 3.3 0 0 1 5.6 0" fill="none" stroke="#6b5300" stroke-width="0.9"/></svg>

<div class="a" style="left:407px;top:232px;width:466px;height:50.5px;background:#FEF9F8;border:1px solid #DEC0B8"></div>
<svg class="a" style="left:418px;top:247px" width="20" height="19" viewBox="0 0 20 20" preserveAspectRatio="none"><rect width="20" height="20" fill="#FBB80F"/><path d="M6 3.5l2.5 0.8v8.3l3.8-2.2-1.8-0.9-1.2-2.8 6.2 2.2v3.3l-6.8 4.1-2.7-1.5z" fill="#3c3c3c"/></svg>
<div class="t" style="left:452px;top:246.8px;font-size:12px;color:#444">Поиск изображений Bing</div>
<div class="t" style="left:452px;top:261px;font-size:9.6px;color:#6a6a6a">Поиск в Интернете</div>
<div class="a" style="left:686px;top:248px;width:172px;height:19px;background:#fff;border:1px solid #C8C8C8"></div>
<div class="a" style="left:691px;top:251px;width:1px;height:13px;background:#111"></div>
<svg class="a" style="left:844px;top:253px" width="9" height="10" viewBox="0 0 9 10"><circle cx="5.5" cy="3.5" r="2.7" fill="none" stroke="#C4C4C4" stroke-width="1.1"/><path d="M3.6 5.6l-3 3.5" stroke="#C4C4C4" stroke-width="1.3"/></svg>
<!-- hand cursor -->
<svg class="a" style="left:505px;top:256px" width="15" height="19" viewBox="0 0 17 22"><path d="M5 11V2.2a1.3 1.3 0 0 1 2.6 0V9 M7.6 8.5a1.3 1.3 0 0 1 2.6 0V10 M10.2 9a1.3 1.3 0 0 1 2.6 0v1.2 M12.8 10a1.3 1.3 0 0 1 2.6 0v5c0 3-2 5.8-5 5.8H8.5c-2 0-3.2-1-4.2-2.6L1.2 13.6a1.3 1.3 0 0 1 2.2-1.4L5 14" fill="#fff" stroke="#222" stroke-width="1.1"/></svg>

<div class="t" style="left:425px;top:478.5px;font-size:9.5px;color:#666">Войдите с помощью своей учетной записи Майкрософт, чтобы добавить фотографии и видео из</div>
<div class="t" style="left:425px;top:490.8px;font-size:9.5px;color:#666">OneDrive и Flickr, а также других сайтов.</div>
<!-- RIGHT PANE -->
<div class="t" style="left:958px;top:140.3px;font-size:15.7px;color:#D46A4F">Формат фона</div>
<svg class="a" style="left:1223px;top:143px" width="8" height="5"><path d="M0 0.5h8l-4 4z" fill="#6a6a6a"/></svg>
<svg class="a" style="left:1256px;top:140px" width="9" height="9"><path d="M0.8 0.8l7.4 7.4 M8.2 0.8l-7.4 7.4" stroke="#555" stroke-width="1.4"/></svg>
<svg class="a" style="left:961px;top:159px" width="22" height="21" viewBox="0 0 22 21"><path d="M1.3 11.6L8.6 4.6l7.6 7-7.5 7.4z" fill="#fff" stroke="#D05036" stroke-width="1.1" stroke-linejoin="round"/><path d="M6.6 6.8C6.2 3.5 7 1.8 8.6 1.8s2.4 1.5 1.8 3.2" fill="none" stroke="#D05036" stroke-width="1"/><circle cx="9.8" cy="8.6" r="1" fill="#C0391B"/><path d="M12.6 5.3C16 6.2 18.6 8 19.2 11.2L17 17.2C17.5 14 16.8 11.5 15 9.2z" fill="#D9401E"/></svg>
<div class="a" style="left:957.5px;top:193.5px;width:309px;height:1px;background:#CFCFCF"></div>
<svg class="a" style="left:965px;top:187px" width="13" height="8"><path d="M0 7l6.5-6 6.5 6" fill="#E6E6E6" stroke="#CFCFCF" stroke-width="1"/><path d="M0.5 7.5h12" stroke="#E6E6E6" stroke-width="1.2"/></svg>
<svg class="a" style="left:963.5px;top:202px" width="6" height="6"><path d="M5.5 0.5v5h-5z" fill="#333"/></svg>
<div class="t" style="left:976px;top:202px;font-size:9.4px;font-weight:bold;color:#C43E1C">Заливка</div>

<svg class="a" style="left:976px;top:224.5px" width="10" height="10"><circle cx="5" cy="5" r="4.4" fill="#fff" stroke="#A8A8A8" stroke-width="0.9"/><circle cx="5" cy="5" r="2" fill="#555"/></svg>
<div class="t k" style="left:990px;top:224.3px;font-size:9.4px;color:#444">Сплошная заливка</div>
<svg class="a" style="left:976px;top:242px" width="10" height="10"><circle cx="5" cy="5" r="4.4" fill="#fff" stroke="#B4B4B4" stroke-width="0.9"/></svg>
<div class="t k" style="left:990px;top:241.9px;font-size:9.4px;color:#444">Градиентная заливка</div>
<svg class="a" style="left:976px;top:259.5px" width="10" height="10"><circle cx="5" cy="5" r="4.4" fill="#fff" stroke="#B4B4B4" stroke-width="0.9"/></svg>
<div class="t k" style="left:990px;top:259.5px;font-size:9.4px;color:#444">Рисунок или текстура</div>
<svg class="a" style="left:976px;top:277.5px" width="10" height="10"><circle cx="5" cy="5" r="4.4" fill="#fff" stroke="#B4B4B4" stroke-width="0.9"/></svg>
<div class="t k" style="left:990px;top:277.3px;font-size:9.4px;color:#444">Узорная заливка</div>
<div class="a" style="left:975.3px;top:296.3px;width:10px;height:10px;background:#fff;border:1px solid #ADADAD"></div>
<div class="t k" style="left:990px;top:296.5px;font-size:9.4px;color:#444">Скрыть фоновые рисунки</div>
<!-- accel underlines -->
<div class="a" style="left:1031px;top:234px;width:5px;height:1px;background:#666"></div>
<div class="a" style="left:990px;top:251.5px;width:5px;height:1px;background:#666"></div>
<div class="a" style="left:990px;top:269px;width:6px;height:1px;background:#666"></div>
<div class="a" style="left:990px;top:287px;width:5px;height:1px;background:#666"></div>
<div class="a" style="left:1006.5px;top:306.5px;width:6.5px;height:1px;background:#666"></div>

<div class="t k" style="left:983.5px;top:327.3px;font-size:9.4px;color:#444">Цвет</div>
<div class="a" style="left:984px;top:336.2px;width:6.5px;height:1px;background:#666"></div>
<div class="a" style="left:1217px;top:320.5px;width:35px;height:21px;background:#fff;border:1px solid #C6C6C6"></div>
<svg class="a" style="left:1225px;top:324px" width="13" height="13" viewBox="0 0 13 13"><path d="M5 4l4.2 4.2-3.6 3.6-4.2-4.2z" fill="#fff" stroke="#555" stroke-width="1"/><path d="M5 4.5V1.5a1 1 0 0 1 2 0v3" fill="none" stroke="#555" stroke-width="0.9"/><path d="M8.5 5c2 0.5 3 2 3 4l-1 1.8c0-1.5-0.5-2.5-1.5-3.3z" fill="#3C7FC0"/></svg>
<svg class="a" style="left:1242px;top:329px" width="6" height="4"><path d="M0 0h6l-3 3z" fill="#555"/></svg>
<div class="t k" style="left:983.5px;top:350.2px;font-size:9.4px;color:#444">Прозрачность</div>
<div class="a" style="left:1039.5px;top:360px;width:5px;height:1px;background:#666"></div>
<div class="a" style="left:1054px;top:350.5px;width:1.6px;height:7.5px;background:#555"></div>
<div class="a" style="left:1055px;top:354px;width:134px;height:1px;background:#B8B8B8"></div>
<div class="a" style="left:1194.5px;top:347px;width:58px;height:16.5px;background:#fff;border:1px solid #C6C6C6"></div>
<div class="t" style="left:1199.5px;top:350.5px;font-size:9px;color:#555">0 %</div>
<svg class="a" style="left:1243px;top:350px" width="6" height="11"><path d="M0.5 3.5l2.5-3 2.5 3z M0.5 7.5l2.5 3 2.5-3z" fill="#666"/></svg>

<div class="a" style="left:957px;top:636px;width:102px;height:19.5px;background:#fff;border:1px solid #ABABAB"></div>
<div class="t k" style="left:957px;top:641.3px;width:102px;text-align:center;font-size:9.5px;color:#333">Применить ко всем</div>
<div class="a" style="left:983px;top:649.8px;width:6.5px;height:1px;background:#666"></div>
<div class="a" style="left:1067px;top:636.5px;width:93.5px;height:18.5px;background:#F8F8F8"></div>
<div class="t" style="left:1067px;top:641.3px;width:93.5px;text-align:center;font-size:9.5px;color:#ABABAB">Восстановить фон</div>
<div class="a" style="left:1079.5px;top:649.8px;width:5px;height:1px;background:#BBBBBB"></div>
<!-- STATUS -->
<div id="status" class="a"></div>
<div class="t" style="left:7px;top:674.2px;font-size:8.6px;color:#555">Слайд 42 из 108</div>
<svg class="a" style="left:88px;top:673px" width="12" height="10" viewBox="0 0 12 10"><path d="M0.5 0.5h3.5l1.5 1.2v8l-1.5-1.2h-3.5z M5.5 1.7l1.5-1.2h1" fill="none" stroke="#666" stroke-width="0.9"/><path d="M7.5 3.5l3.5 4.5 M11 3.5l-3.5 4.5" stroke="#666" stroke-width="0.9"/></svg>
<div class="t k" style="left:113px;top:674px;font-size:9.4px;color:#444">русский</div>

<svg class="a" style="left:849px;top:674.5px" width="8" height="10" viewBox="0 0 8 10"><path d="M2 2.5l2-2 2 2z" fill="#666"/><path d="M0 4.5h8 M0 6.5h8 M0 8.5h8" stroke="#666" stroke-width="0.9"/></svg>
<div class="t k" style="left:863px;top:674.3px;font-size:9.4px;color:#444">Заметки</div>
<svg class="a" style="left:914px;top:674.5px" width="12" height="11" viewBox="0 0 12 11"><path d="M0.5 0.5h11v7h-6.5l-3 3v-3h-1.5z" fill="#777"/></svg>
<div class="t k" style="left:928.5px;top:674.3px;font-size:9.4px;color:#444">Примечания</div>
<div class="a" style="left:999px;top:671px;width:30px;height:17px;background:#D0D0D0"></div>
<svg class="a" style="left:1008px;top:673px" width="12" height="13" viewBox="0 0 12 13"><path d="M0.5 0.5h11v12h-11z M2.5 2.5h7v5h-7z M2.5 9.5h7" fill="none" stroke="#666" stroke-width="0.9"/><path d="M5 3.8h3" stroke="#666"/></svg>
<svg class="a" style="left:1038px;top:674px" width="13" height="12" viewBox="0 0 13 12"><path d="M0.5 0.5h5v4h-5z M7.5 0.5h5v4h-5z M0.5 7.5h5v4h-5z M7.5 7.5h5v4h-5z" fill="none" stroke="#777" stroke-width="0.9"/></svg>
<svg class="a" style="left:1069px;top:673px" width="11" height="13" viewBox="0 0 11 13"><path d="M0.5 0.5h4.5v12h-4.5z M6 0.5h4.5v12h-4.5z M1.5 3h3 M1.5 5h3 M1.5 7h3 M1.5 9h3 M7 3h3 M7 5h3 M7 7h3 M7 9h3" fill="none" stroke="#777" stroke-width="0.9"/></svg>
<svg class="a" style="left:1099px;top:674px" width="12" height="12" viewBox="0 0 12 12"><path d="M0.5 0.8h11 M1.5 0.8v6h9v-6 M6 6.8v3.5 M3.5 11h5" fill="none" stroke="#777" stroke-width="1"/></svg>
<div class="a" style="left:1124px;top:678.5px;width:5px;height:1.3px;background:#555"></div>
<div class="a" style="left:1131px;top:678px;width:81px;height:1px;background:#B8B8B8"></div>
<div class="a" style="left:1172px;top:676px;width:1px;height:5px;background:#B8B8B8"></div>
<div class="a" style="left:1160px;top:674.5px;width:3.2px;height:8px;background:#555"></div>
<svg class="a" style="left:1215px;top:675px" width="7" height="7"><path d="M3.5 0v7 M0 3.5h7" stroke="#555" stroke-width="1.3"/></svg>
<div class="t" style="left:1234px;top:674.3px;font-size:9.4px;color:#666">75 %</div>
<svg class="a" style="left:1263.5px;top:673px" width="12" height="12" viewBox="0 0 12 12"><path d="M0.5 0.5h11v11h-11z" fill="none" stroke="#777" stroke-width="0.9"/><path d="M2.5 2.5l2.5 2.5 M9.5 2.5l-2.5 2.5 M2.5 9.5l2.5-2.5 M9.5 9.5l-2.5-2.5" stroke="#777" stroke-width="1"/></svg>
<!-- TASKBAR -->
<div id="taskbar" class="a"></div>
<svg class="a" style="left:12.5px;top:697px" width="14" height="14" viewBox="0 0 14 14"><path d="M0 2l5.8-0.8v5.4H0z M6.6 1.1L14 0v6.6H6.6z M0 7.4h5.8v5.4L0 12z M6.6 7.4H14V14l-7.4-1.1z" fill="#fff"/></svg>
<svg class="a" style="left:50px;top:696.5px" width="15" height="15" viewBox="0 0 15 15"><circle cx="9" cy="6" r="4.6" fill="none" stroke="#fff" stroke-width="1.3"/><path d="M5.7 9.3L1 14" stroke="#fff" stroke-width="1.5"/></svg>
<svg class="a" style="left:87.5px;top:698.5px" width="17" height="12" viewBox="0 0 17 12"><path d="M3.5 0.7h10v10.6h-10z M0.7 2.5v7 M16.3 2.5v7" fill="none" stroke="#fff" stroke-width="1.2"/></svg>
<svg class="a" style="left:129px;top:696px" width="17" height="16" viewBox="0 0 17 16"><path d="M15.5 9H5.2c0.3 2.5 2.4 3.8 4.8 3.8 2 0 3.6-0.6 5-1.5v3.3c-1.5 0.9-3.4 1.4-5.6 1.4C4.6 16 1 13.2 1 8.2 1 3.6 4.5 0 9 0c4.2 0 6.6 3 6.6 7.4z M11.6 6.3C11.5 4.6 10.5 3.3 8.5 3.3 6.7 3.3 5.5 4.6 5.3 6.3z" fill="#1E88E5"/></svg>
<svg class="a" style="left:167px;top:697px" width="18" height="14" viewBox="0 0 18 14"><path d="M0 1h7l2 2h9v11H0z" fill="#F5C85C"/><rect x="0" y="5" width="18" height="9" fill="#FFD97A"/><rect x="4" y="9" width="10" height="3" fill="#3EA4E8"/></svg>
<div class="a" style="left:160.5px;top:718px;width:31.5px;height:2px;background:#7AB8E8"></div>
<svg class="a" style="left:206px;top:695.5px" width="18" height="17" viewBox="0 0 18 17"><path d="M5.5 4V3a3.5 3.5 0 0 1 7 0v1" fill="none" stroke="#fff" stroke-width="1.3"/><path d="M1 4h16v13H1z" fill="#fff"/><path d="M5.5 7.5h3v3h-3z M9.5 7.5h3v3h-3z M5.5 11.5h3v3h-3z M9.5 11.5h3v3h-3z" fill="#111"/></svg>
<svg class="a" style="left:246px;top:697px" width="16" height="15" viewBox="0 0 16 15"><rect x="0" y="0" width="16" height="15" fill="#4A86B8"/><rect x="1.5" y="1.5" width="13" height="12" fill="#8FB8D8"/><path d="M5 3.5l7 4-7 4z" fill="#F27A1A"/></svg>
<svg class="a" style="left:284px;top:696px" width="19" height="17" viewBox="0 0 19 17"><ellipse cx="9.5" cy="8.5" rx="8.6" ry="8" fill="#E11B22"/><ellipse cx="9.5" cy="8.5" rx="3.4" ry="6" fill="#0A0A0A"/></svg>
<svg class="a" style="left:323px;top:695px" width="20" height="19" viewBox="0 0 20 19"><path d="M0 0h17l3 3v16H0z" fill="#3B5DB8"/><rect x="4" y="0.5" width="11" height="6" fill="#E8EAF3"/><rect x="11" y="1.5" width="2.5" height="4" fill="#3B5DB8"/><rect x="2.5" y="9" width="15" height="9" fill="#F4D6E4"/><path d="M4 11.5h12 M4 14h12 M4 16.5h12" stroke="#C95B7E" stroke-width="0.7"/></svg>
<svg class="a" style="left:362.5px;top:696px" width="19" height="16" viewBox="0 0 19 16"><path d="M0 0.5l9.5 7.5L0 15.5z" fill="#C6B3E8"/><path d="M19 0.5L9.5 8l9.5 7.5z" fill="#9B7FD8"/><path d="M0 0.5l9.5 7.5 9.5-7.5-9.5 4z" fill="#7B5FC0"/><path d="M0 15.5l9.5-7.5 9.5 7.5-9.5-3.5z" fill="#6A4EA8"/></svg>
<svg class="a" style="left:402px;top:696px" width="18" height="16" viewBox="0 0 18 16"><rect x="7" y="2" width="11" height="12" fill="#fff"/><path d="M0 1.5L10 0v16L0 14.5z" fill="#3955A3"/><path d="M2 4.5l2 7 2-7" fill="none" stroke="#fff" stroke-width="1.4"/><path d="M12 5a2 2 0 1 1 0.1 0 M11.5 8v4" stroke="#3955A3" stroke-width="1" fill="none"/></svg>
<svg class="a" style="left:441px;top:696px" width="18" height="16" viewBox="0 0 18 16"><rect x="7" y="2" width="11" height="12" fill="#fff"/><path d="M11 4.5h5 M11 7h5 M11 9.5h5 M11 12h5" stroke="#2B579A" stroke-width="1"/><path d="M0 1.5L10 0v16L0 14.5z" fill="#2B579A"/><path d="M1.5 5l1.5 6 2-4.5 2 4.5 1.5-6" fill="none" stroke="#fff" stroke-width="1.2"/></svg>
<svg class="a" style="left:480px;top:697px" width="19" height="14" viewBox="0 0 19 14"><rect x="0" y="0" width="19" height="14" fill="#1B3F78"/><rect x="1" y="2" width="17" height="11" fill="#050A18"/><path d="M2 9.5h14" stroke="#fff" stroke-width="0.6"/><text x="2.5" y="8.5" font-size="5.5" fill="#fff" font-family="Liberation Sans" font-weight="bold">PfaNa</text></svg>
<div class="a" style="left:510px;top:688px;width:38.5px;height:32px;background:#3C3C3C"></div>
<svg class="a" style="left:520px;top:696px" width="19" height="16" viewBox="0 0 19 16"><rect x="8" y="2" width="11" height="12" fill="#fff"/><path d="M13 4.5a3.5 3.5 0 1 0 3.5 3.5h-3.5z" fill="#D24726"/><path d="M0 1.5L10.5 0v16L0 14.5z" fill="#D24726"/><path d="M2.8 11.5V4h2.3a2 2 0 0 1 0 4.2H2.8" fill="none" stroke="#fff" stroke-width="1.3"/></svg>
<div class="a" style="left:510px;top:718px;width:38.5px;height:2px;background:#7AB8E8"></div>
<svg class="a" style="left:558px;top:695.5px" width="20" height="19" viewBox="0 0 20 19"><rect x="0" y="0" width="19" height="17" fill="#4E9A2A"/><path d="M0 17h19v2z" fill="#2E6B18"/><path d="M14 4.5H8.5a3 3 0 0 0-3 3v2a3 3 0 0 0 3 3H14" fill="none" stroke="#fff" stroke-width="2.3"/></svg>
<div class="a" style="left:552px;top:718px;width:34px;height:2px;background:#7AB8E8"></div>
<svg class="a" style="left:598px;top:695.5px" width="20" height="19" viewBox="0 0 20 19"><rect x="0" y="0" width="19" height="17" fill="#fff"/><path d="M0 17h19v2z" fill="#8aa878"/><path d="M14 4.5H8.5a3 3 0 0 0-3 3v2a3 3 0 0 0 3 3H14" fill="none" stroke="#3C8A1E" stroke-width="2.3"/></svg>
<div class="a" style="left:592px;top:718px;width:33px;height:2px;background:#7AB8E8"></div>

<svg class="a" style="left:1065px;top:700.5px" width="10" height="7"><path d="M0.7 6l4.3-4.8 4.3 4.8" fill="none" stroke="#fff" stroke-width="1.2"/></svg>
<svg class="a" style="left:1081.5px;top:696.5px" width="14" height="13" viewBox="0 0 14 13"><rect width="14" height="13" fill="#F0801E"/><path d="M3 9.5h8 M5.5 8c0-2 3-2 3-4.5 M8 6.5c0-1 1.5-1 1.5-2.5" fill="none" stroke="#fff" stroke-width="1"/></svg>
<svg class="a" style="left:1100.5px;top:699px" width="14" height="10" viewBox="0 0 14 10"><rect x="4.5" y="2.5" width="9" height="6" fill="none" stroke="#fff" stroke-width="1"/><rect x="6" y="4" width="6" height="3" fill="#fff"/><path d="M0 4.5h4 M1.5 2v2.5 M3 2v2.5" stroke="#fff" stroke-width="0.9"/></svg>
<svg class="a" style="left:1122.5px;top:698px" width="12" height="12" viewBox="0 0 12 12"><path d="M1 11a10 10 0 0 1 10-10 M3.5 11a7.5 7.5 0 0 1 7.5-7.5 M6 11a5 5 0 0 1 5-5" fill="none" stroke="#fff" stroke-width="1"/><circle cx="10.5" cy="10.5" r="1.2" fill="#fff"/></svg>
<svg class="a" style="left:1140px;top:698px" width="13" height="12" viewBox="0 0 13 12"><path d="M0.5 4h2.5l3-3v10l-3-3h-2.5z" fill="none" stroke="#fff" stroke-width="1"/><path d="M8 4a2.5 2.5 0 0 1 0 4 M10 2.5a5 5 0 0 1 0 7" fill="none" stroke="#fff" stroke-width="0.9"/></svg>
<div class="t" style="left:1160.5px;top:699.3px;font-size:9.4px;color:#fff">ENG</div>
<div class="t" style="left:1199px;top:692px;font-size:9.2px;color:#f0f0f0">22:05</div>
<div class="t" style="left:1189.5px;top:707px;font-size:9px;color:#f0f0f0">08.11.2016</div>
<svg class="a" style="left:1247px;top:698px" width="14" height="13" viewBox="0 0 14 13"><path d="M0.6 0.6h12.8v8.8H7.5l-3 3v-3H0.6z" fill="none" stroke="#fff" stroke-width="1.1"/></svg>
</body></html>
